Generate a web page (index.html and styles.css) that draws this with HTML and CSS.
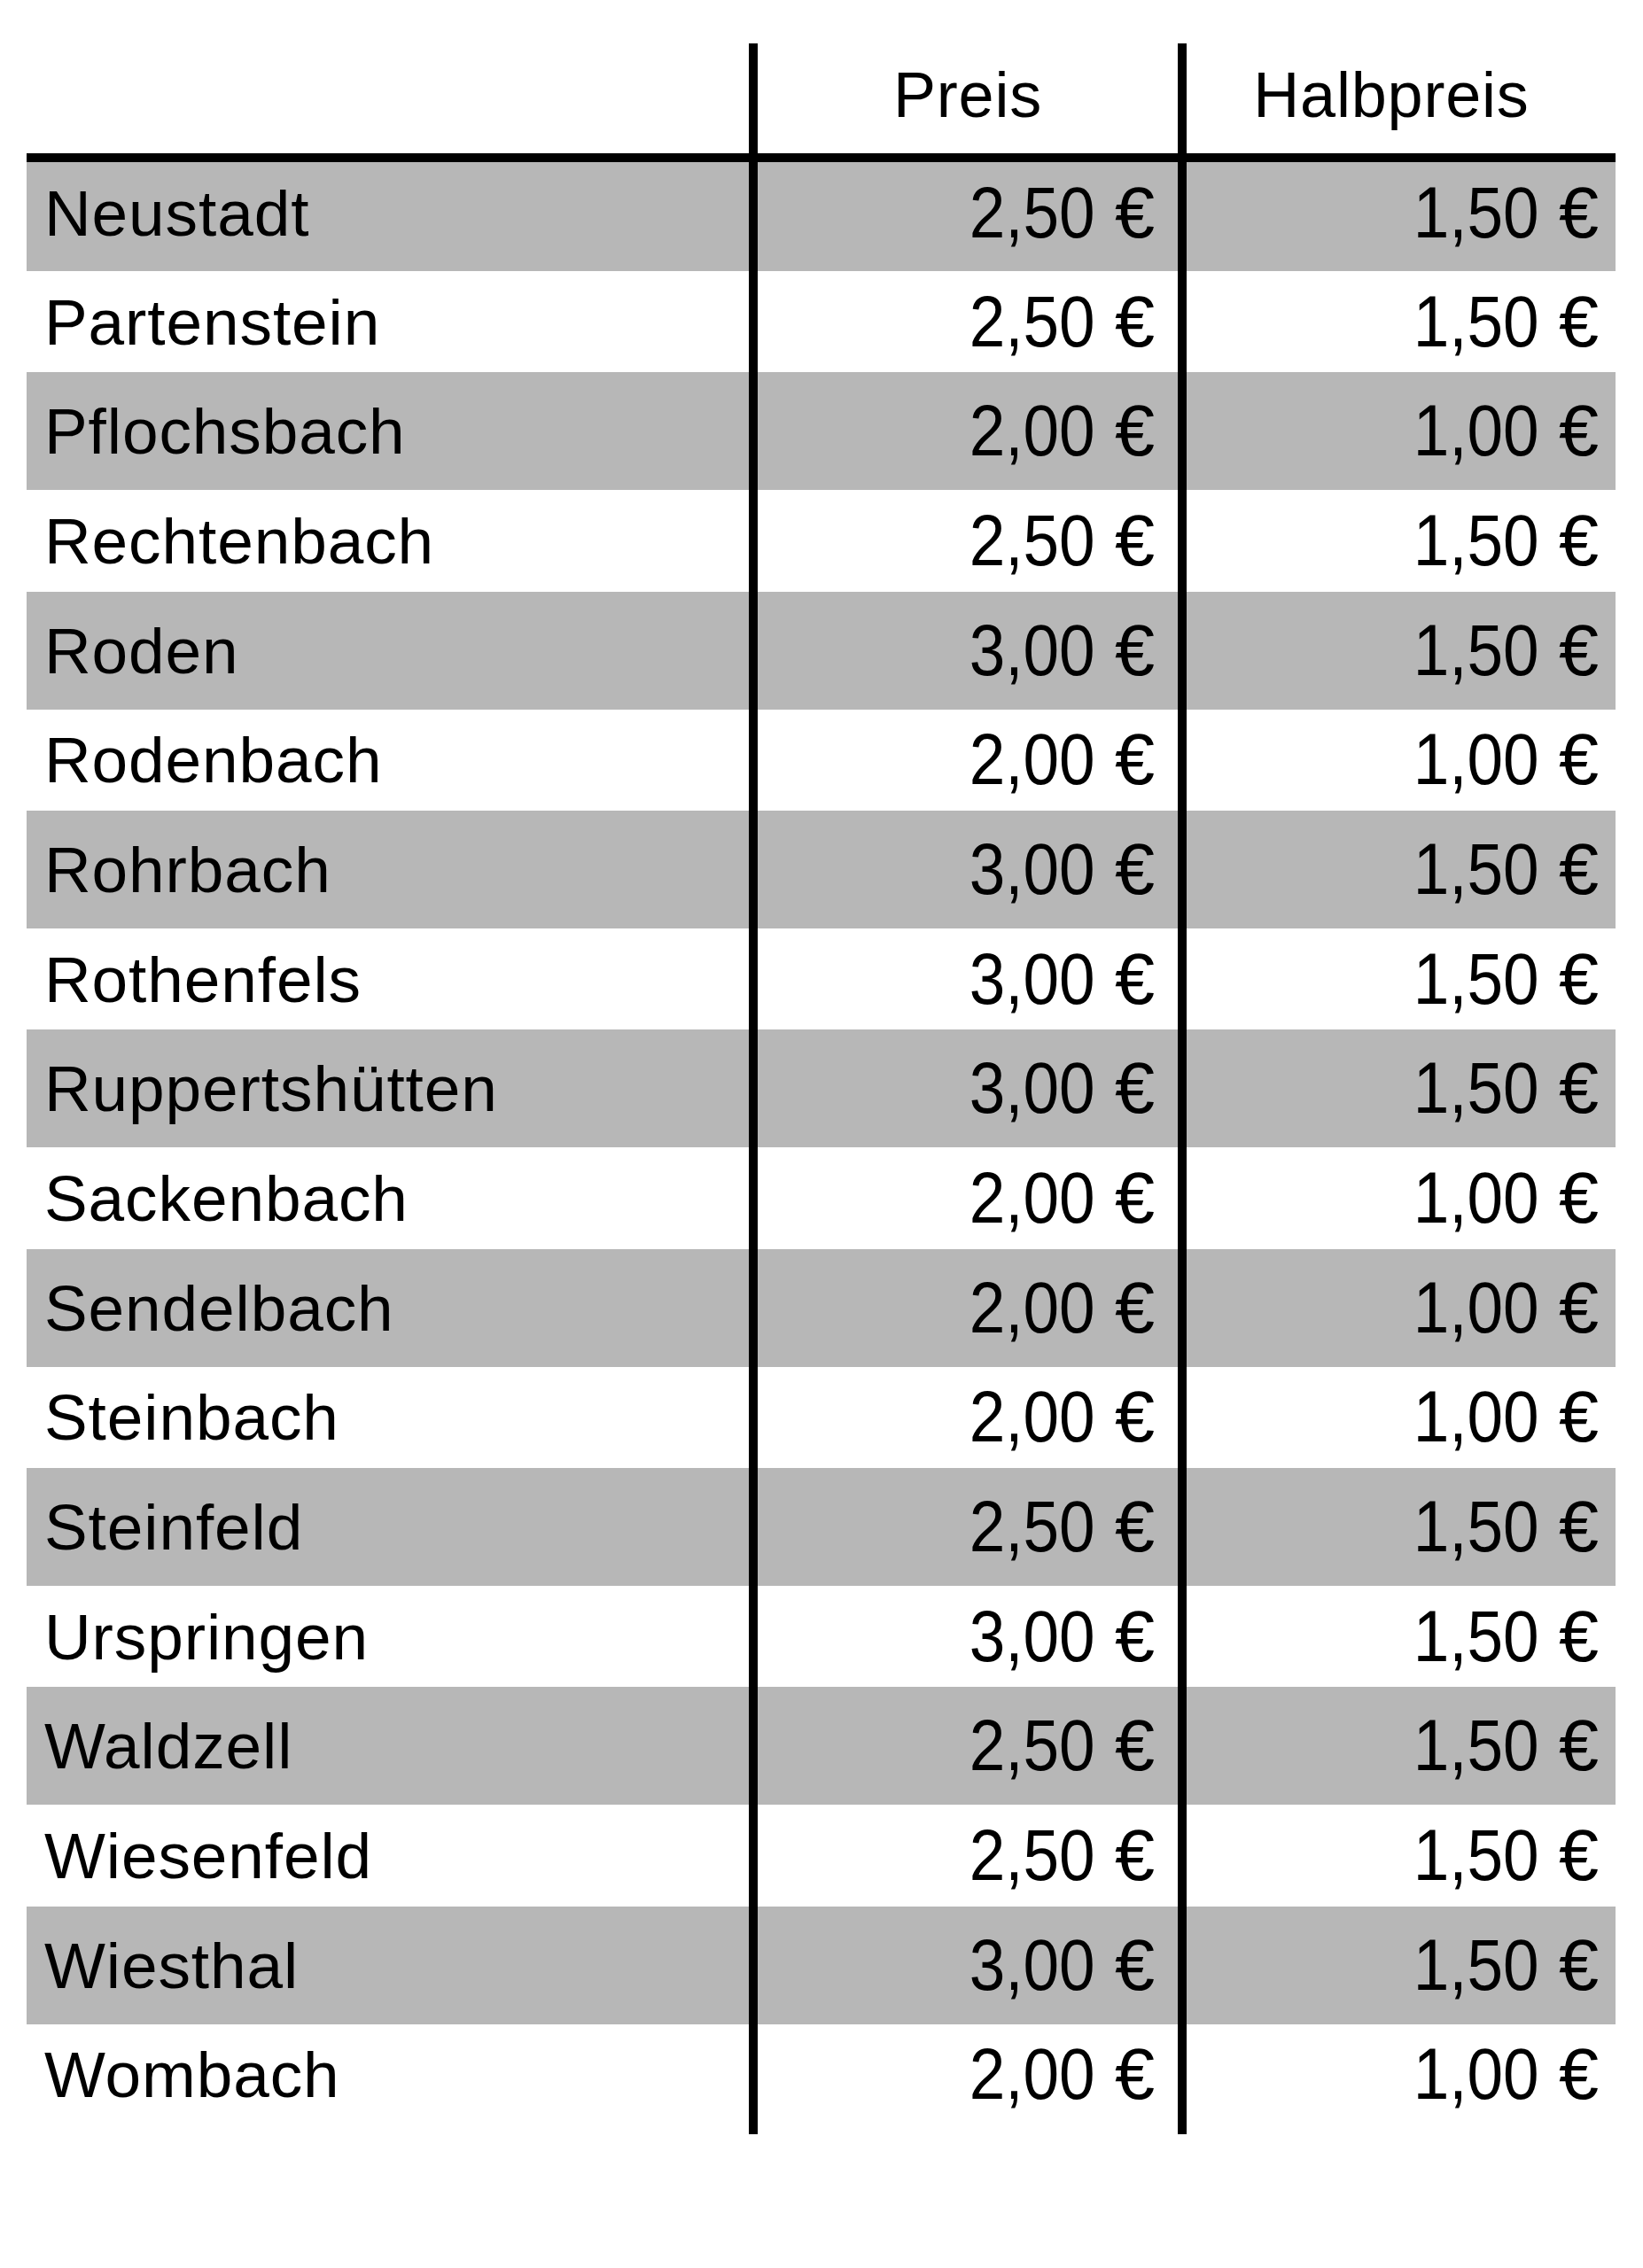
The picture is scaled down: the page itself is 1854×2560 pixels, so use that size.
FILE: index.html
```html
<!DOCTYPE html>
<html lang="de">
<head>
<meta charset="utf-8">
<title>Preise</title>
<link rel="stylesheet" href="styles.css">
</head>
<body>
<div class="sheet">
  <div class="row head">
    <div class="cell name"></div>
    <div class="cell price">Preis</div>
    <div class="cell half">Halbpreis</div>
  </div>
  <div class="row gray first"><div class="cell name">Neustadt</div><div class="cell price"><span class="val"><span class="num">2,50</span> €</span></div><div class="cell half"><span class="val"><span class="num">1,50</span> €</span></div></div>
  <div class="row white"><div class="cell name">Partenstein</div><div class="cell price"><span class="val"><span class="num">2,50</span> €</span></div><div class="cell half"><span class="val"><span class="num">1,50</span> €</span></div></div>
  <div class="row gray"><div class="cell name">Pflochsbach</div><div class="cell price"><span class="val"><span class="num">2,00</span> €</span></div><div class="cell half"><span class="val"><span class="num">1,00</span> €</span></div></div>
  <div class="row white"><div class="cell name">Rechtenbach</div><div class="cell price"><span class="val"><span class="num">2,50</span> €</span></div><div class="cell half"><span class="val"><span class="num">1,50</span> €</span></div></div>
  <div class="row gray"><div class="cell name">Roden</div><div class="cell price"><span class="val"><span class="num">3,00</span> €</span></div><div class="cell half"><span class="val"><span class="num">1,50</span> €</span></div></div>
  <div class="row white"><div class="cell name">Rodenbach</div><div class="cell price"><span class="val"><span class="num">2,00</span> €</span></div><div class="cell half"><span class="val"><span class="num">1,00</span> €</span></div></div>
  <div class="row gray"><div class="cell name">Rohrbach</div><div class="cell price"><span class="val"><span class="num">3,00</span> €</span></div><div class="cell half"><span class="val"><span class="num">1,50</span> €</span></div></div>
  <div class="row white"><div class="cell name">Rothenfels</div><div class="cell price"><span class="val"><span class="num">3,00</span> €</span></div><div class="cell half"><span class="val"><span class="num">1,50</span> €</span></div></div>
  <div class="row gray"><div class="cell name">Ruppertshütten</div><div class="cell price"><span class="val"><span class="num">3,00</span> €</span></div><div class="cell half"><span class="val"><span class="num">1,50</span> €</span></div></div>
  <div class="row white"><div class="cell name">Sackenbach</div><div class="cell price"><span class="val"><span class="num">2,00</span> €</span></div><div class="cell half"><span class="val"><span class="num">1,00</span> €</span></div></div>
  <div class="row gray"><div class="cell name">Sendelbach</div><div class="cell price"><span class="val"><span class="num">2,00</span> €</span></div><div class="cell half"><span class="val"><span class="num">1,00</span> €</span></div></div>
  <div class="row white"><div class="cell name">Steinbach</div><div class="cell price"><span class="val"><span class="num">2,00</span> €</span></div><div class="cell half"><span class="val"><span class="num">1,00</span> €</span></div></div>
  <div class="row gray"><div class="cell name">Steinfeld</div><div class="cell price"><span class="val"><span class="num">2,50</span> €</span></div><div class="cell half"><span class="val"><span class="num">1,50</span> €</span></div></div>
  <div class="row white"><div class="cell name">Urspringen</div><div class="cell price"><span class="val"><span class="num">3,00</span> €</span></div><div class="cell half"><span class="val"><span class="num">1,50</span> €</span></div></div>
  <div class="row gray"><div class="cell name">Waldzell</div><div class="cell price"><span class="val"><span class="num">2,50</span> €</span></div><div class="cell half"><span class="val"><span class="num">1,50</span> €</span></div></div>
  <div class="row white"><div class="cell name">Wiesenfeld</div><div class="cell price"><span class="val"><span class="num">2,50</span> €</span></div><div class="cell half"><span class="val"><span class="num">1,50</span> €</span></div></div>
  <div class="row gray"><div class="cell name">Wiesthal</div><div class="cell price"><span class="val"><span class="num">3,00</span> €</span></div><div class="cell half"><span class="val"><span class="num">1,50</span> €</span></div></div>
  <div class="row white"><div class="cell name">Wombach</div><div class="cell price"><span class="val"><span class="num">2,00</span> €</span></div><div class="cell half"><span class="val"><span class="num">1,00</span> €</span></div></div>
  <div class="row tail"><div class="cell name"></div><div class="cell price"></div><div class="cell half"></div></div>
</div>
</body>
</html>
```

FILE: styles.css
```css
html, body {
  margin: 0;
  padding: 0;
  background: #ffffff;
}

body {
  font-family: "Liberation Sans", Arial, sans-serif;
  color: #000000;
}

.sheet {
  width: 1793px;
  padding: 49px 0 0 30px;
}

.row {
  display: grid;
  grid-template-columns: 815px 484px 494px;
}

.cell {
  display: flex;
  align-items: center;
  line-height: 1;
  white-space: nowrap;
  box-sizing: border-box;
}

.cell.price,
.cell.half {
  border-left: 10px solid #000000;
  justify-content: flex-end;
  font-size: 81px;
}

.cell.price {
  padding-right: 26px;
}

.cell.half {
  padding-right: 19px;
}

.cell.name {
  font-size: 73px;
  letter-spacing: 0.9px;
  padding-left: 20px;
}

.val {
  white-space: pre;
}

.num {
  display: inline-block;
  transform: scaleX(0.9);
  transform-origin: right center;
}

.head {
  height: 124px;
  border-bottom: 10px solid #000000;
}

.head .cell {
  font-size: 72px;
  letter-spacing: 0.8px;
  justify-content: center;
  align-items: flex-start;
  padding-top: 22px;
}

.head .cell.price {
  padding-right: 0;
}

.head .cell.half {
  padding-right: 22px;
}

.row.gray {
  height: 133px;
  background: #b7b7b7;
}

.row.gray.first {
  height: 123px;
}

.row.gray.first .cell {
  padding-bottom: 9px;
}

.row.white {
  height: 114.33px;
  background: #ffffff;
}

.row.tail {
  height: 10px;
}
```
